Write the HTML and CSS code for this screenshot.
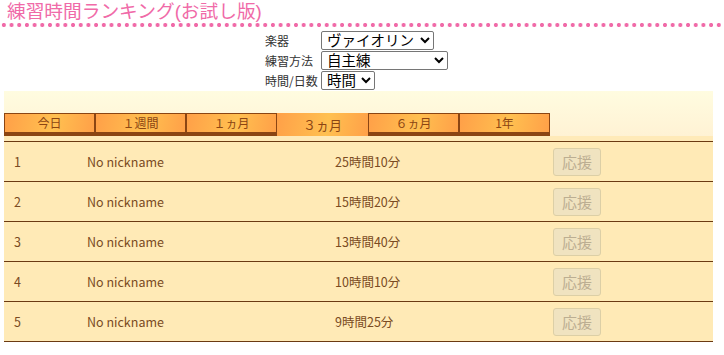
FILE: index.html
```html
<!DOCTYPE html>
<html lang="ja">
<head>
<meta charset="utf-8">
<title>練習時間ランキング(お試し版)</title>
<link rel="stylesheet" href="styles.css">
</head>
<body>
<h1 class="title">練習時間ランキング(お試し版)</h1>
<div class="dots"></div>
<form class="filters">
  <label class="flabel" for="inst">楽器</label>
  <select id="inst" class="fsel inst"><option>ヴァイオリン</option></select>
  <label class="flabel" for="method">練習方法</label>
  <select id="method" class="fsel wide"><option>自主練</option></select>
  <label class="flabel" for="unit">時間/日数</label>
  <select id="unit" class="fsel unit"><option>時間</option></select>
</form>
<div class="panel">
  <div class="tabs">
    <div class="tab">今日</div>
    <div class="tab">１週間</div>
    <div class="tab">１ヵ月</div>
    <div class="tab active">３ヵ月</div>
    <div class="tab">６ヵ月</div>
    <div class="tab">1年</div>
  </div>
  <div class="band"></div>
  <div class="rows">
    <div class="row"><span class="rank">1</span><span class="nick">No nickname</span><span class="time">25時間10分</span><button class="cheer" disabled>応援</button></div>
    <div class="row"><span class="rank">2</span><span class="nick">No nickname</span><span class="time">15時間20分</span><button class="cheer" disabled>応援</button></div>
    <div class="row"><span class="rank">3</span><span class="nick">No nickname</span><span class="time">13時間40分</span><button class="cheer" disabled>応援</button></div>
    <div class="row"><span class="rank">4</span><span class="nick">No nickname</span><span class="time">10時間10分</span><button class="cheer" disabled>応援</button></div>
    <div class="row"><span class="rank">5</span><span class="nick">No nickname</span><span class="time">9時間25分</span><button class="cheer" disabled>応援</button></div>
  </div>
</div>
</body>
</html>
```
FILE: styles.css
```css
html, body {
  margin: 0;
  padding: 0;
  background: #ffffff;
  font-family: "Noto Sans CJK JP", "Noto Sans", sans-serif;
}
.title {
  margin: 0;
  padding: 1px 0 0 7px;
  height: 21px;
  font-family: "Liberation Sans", "Noto Sans CJK JP", sans-serif;
  font-size: 18.7px;
  line-height: 21px;
  font-weight: normal;
  color: #f06aa8;
}
.dots {
  height: 6px;
  background-image: radial-gradient(circle at center, #f06aa8 0, #f06aa8 1.8px, transparent 2.3px);
  background-size: 7.7px 6px;
  background-position: 0 0;
}
.filters {
  display: grid;
  grid-template-columns: 56px auto;
  grid-auto-rows: 19px;
  justify-content: start;
  align-items: center;
  margin: 0;
  padding: 3px 0 0 265px;
  row-gap: 1px;
}
.flabel {
  font-size: 12px;
  color: #333;
  line-height: 19px;
}
.fsel {
  justify-self: start;
  box-sizing: border-box;
  font-family: "Liberation Sans", "Noto Sans CJK JP", sans-serif;
  font-size: 14.5px;
  height: 19px;
  padding: 0 0 0 1px;
  border: 1px solid #767676;
  border-radius: 2px;
  background: #fff;
  color: #000;
}
.fsel.inst {
  width: 113px;
}
.fsel.wide {
  width: 127px;
}
.fsel.unit {
  width: 54px;
}
.panel {
  margin: 1px 11px 0 4px;
  background: linear-gradient(#fffce0, #fff2d4 45px, #ffebb8 45px);
}
.tabs {
  display: flex;
  padding-top: 22px;
  height: 23px;
  align-items: flex-start;
}
.tab {
  box-sizing: border-box;
  width: 91px;
  height: 23px;
  border: 1px solid #8b4513;
  border-bottom-width: 4px;
  background: linear-gradient(100deg, #ffa048 0%, #ffc050 55%, #ffa048 100%);
  color: #8b4513;
  font-size: 12px;
  text-align: center;
  line-height: 17px;
}
.tab.active {
  border: none;
  height: 23px;
  line-height: 24px;
  font-size: 13px;
}
.band {
  height: 5px;
  background: #ffeab8;
}
.rows {
  border-top: 1px solid #6b3a12;
  background: #ffeab6;
}
.row {
  display: grid;
  grid-template-columns: 73px 248px 218px 48px;
  align-items: center;
  height: 39px;
  padding-left: 10px;
  border-bottom: 1px solid #6b3a12;
  color: #7a4b22;
  font-size: 12.5px;
}
.cheer {
  box-sizing: border-box;
  width: 48px;
  height: 28px;
  padding: 0;
  border: 1px solid #dccfa6;
  border-radius: 3px;
  background: #f0e3c0;
  color: #bcae92;
  font-family: "Noto Sans CJK JP", sans-serif;
  font-size: 15px;
}
```
